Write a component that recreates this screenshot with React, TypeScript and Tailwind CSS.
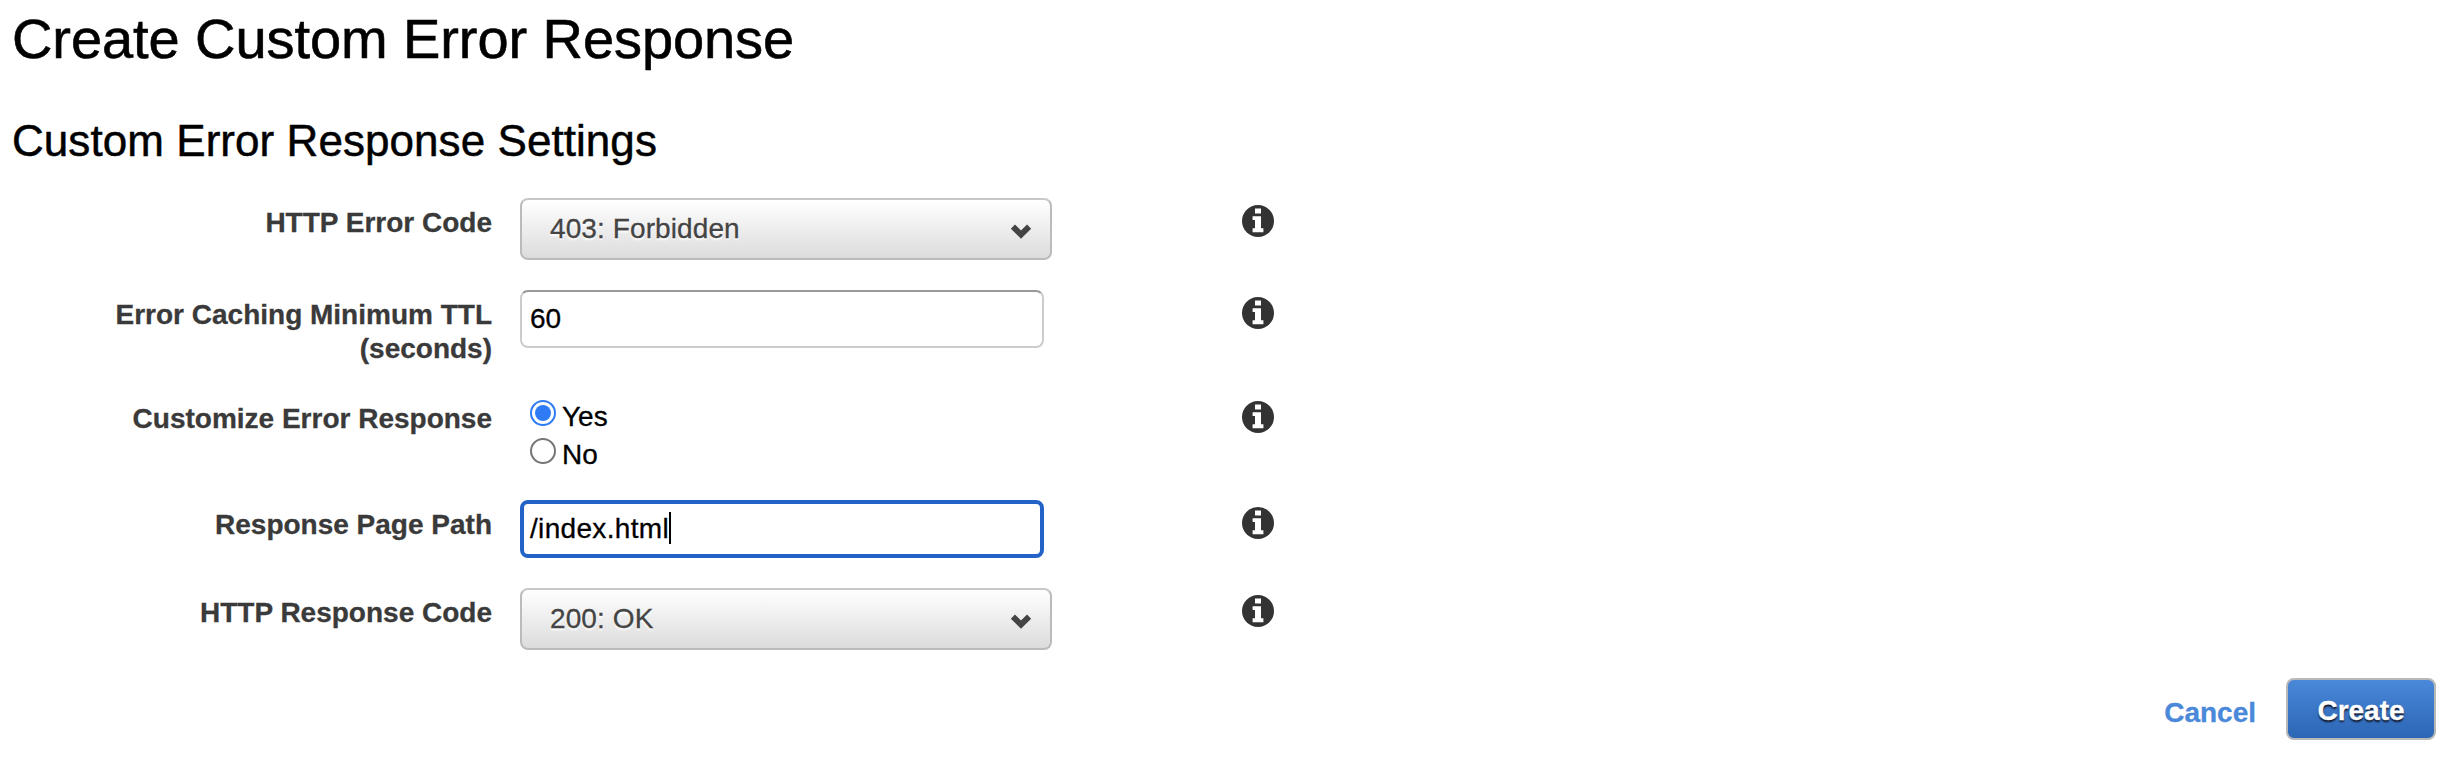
import { useState } from "react";
import type { ReactNode } from "react";

function InfoIcon() {
  return (
    <svg viewBox="0 0 32 32" className="mt-[6.5px] size-8 shrink-0" role="img" aria-label="Info">
      <circle cx="16" cy="16" r="16" fill="#333333" />
      <path d="M13 3.6h6v4.8h-6zM10.6 11.3H19v12h2.4v4H10.6v-4H13v-8.2h-2.4z" fill="#fff" />
    </svg>
  );
}

function Row({ label, height, children }: { label: string; height: string; children: ReactNode }) {
  return (
    <div className={`flex items-start ${height}`}>
      <div className="w-[492px] shrink-0 pl-24 pt-2 text-right text-[28px] leading-[34px] font-bold text-[#3a3a3a]">
        {label}
      </div>
      <div className="ml-7 w-[722px] shrink-0">{children}</div>
      <InfoIcon />
    </div>
  );
}

function Select({ value }: { value: string }) {
  return (
    <button
      type="button"
      className="flex h-[62px] w-[532px] items-center justify-between rounded-[8px] border-2 border-[#bbb] border-t-[#c8c8c8] bg-linear-to-b from-white to-[#dcdcdc] pr-[18px] pl-7 text-[28px] leading-[34px] text-[#444] [text-shadow:0_2px_2px_#fff]"
    >
      <span className="tracking-[0.1px]">{value}</span>
      <svg viewBox="0 0 22 16" className="mt-1 h-4 w-[22px]" aria-hidden="true">
        <path d="M2.9 3.6 11 11.6 19.1 3.6" fill="none" stroke="#444" strokeWidth="5.8" />
      </svg>
    </button>
  );
}

function Radio({ label, checked, onSelect }: { label: string; checked: boolean; onSelect: () => void }) {
  return (
    <label className="flex h-[38px] items-start gap-1.5">
      <input type="radio" name="customize" checked={checked} onChange={onSelect} className="sr-only" />
      <svg viewBox="0 0 26 26" className="size-[26px]" aria-hidden="true">
        <circle cx="13" cy="13" r="12" fill="#fff" stroke={checked ? "#2f7bf6" : "#767676"} strokeWidth="2" />
        {checked && <circle cx="13" cy="13" r="8" fill="#2f7bf6" />}
      </svg>
      <span>{label}</span>
    </label>
  );
}

export default function App() {
  const [custom, setCustom] = useState(true);
  return (
    <main className="flex h-[758px] w-[2454px] flex-col overflow-hidden bg-white font-['Liberation_Sans',Arial,sans-serif] text-[28px] leading-[34px] text-black [-webkit-text-stroke:0.3px]">
      <h1 className="mt-[7px] ml-3 text-[56px] leading-[64px] tracking-[-0.08px] [-webkit-text-stroke:0.6px]">
        Create Custom Error Response
      </h1>
      <h2 className="mt-[45px] ml-3 text-[44px] leading-[50px] tracking-[0.06px] [-webkit-text-stroke:0.5px]">
        Custom Error Response Settings
      </h2>
      <form className="mt-8 flex flex-col">
        <Row label="HTTP Error Code" height="h-[92px]">
          <Select value="403: Forbidden" />
        </Row>
        <Row label="Error Caching Minimum TTL (seconds)" height="h-[104px]">
          <div className="flex h-[58px] w-[524px] rounded-[8px] border-2 border-[#ccc] border-t-[#999] pt-[10px] pl-2">
            60
          </div>
        </Row>
        <Row label="Customize Error Response" height="h-[106px]">
          <div className="pt-1.5 pl-2.5">
            <Radio label="Yes" checked={custom} onSelect={() => setCustom(true)} />
            <Radio label="No" checked={!custom} onSelect={() => setCustom(false)} />
          </div>
        </Row>
        <Row label="Response Page Path" height="h-[88px]">
          <div className="flex h-[58px] w-[524px] rounded-[8px] border-4 border-[#2363c8] pt-2 pl-1.5">
            <span className="tracking-[0.33px]">/index.html</span>
            <span className="h-8 w-0.5 bg-black" />
          </div>
        </Row>
        <Row label="HTTP Response Code" height="h-[90px]">
          <Select value="200: OK" />
        </Row>
        <div className="flex h-[62px] items-start justify-end pr-[18px] font-bold">
          <button type="button" className="mt-[18px] mr-[30px] text-[#4a88d9]">
            Cancel
          </button>
          <button
            type="button"
            className="h-[62px] w-[150px] rounded-[8px] border-2 border-[#b8b8b8] bg-linear-to-b from-[#4a88d9] to-[#2c66b5] pt-[3px] text-white [text-shadow:0_2px_2px_#112]"
          >
            Create
          </button>
        </div>
      </form>
    </main>
  );
}
